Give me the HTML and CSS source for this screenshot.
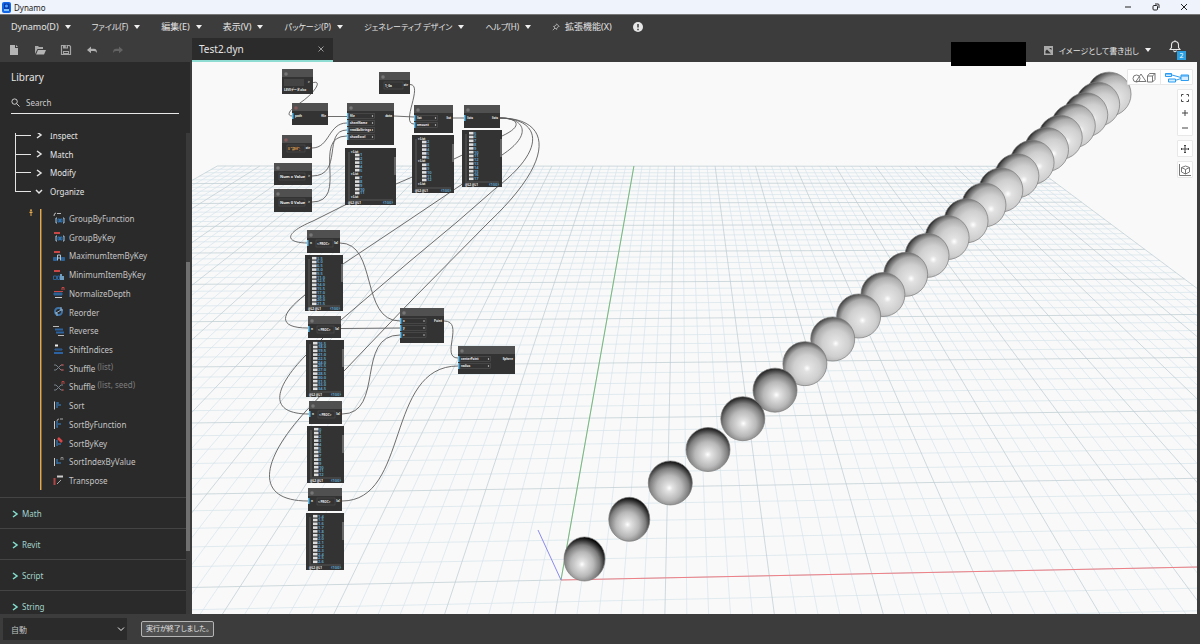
FILE: index.html
```html
<!DOCTYPE html>
<html lang="ja">
<head>
    <meta charset="UTF-8">
    <meta name="viewport" content="width=device-width, initial-scale=1.0">
    <title>Dynamo</title>
    <link rel="stylesheet" href="styles.css">
</head>
<body>
    <div class="titlebar">
        <svg class="app-logo" viewBox="0 0 9 11"><rect width="9" height="11" rx="2" fill="#1267e8"/><path d="M2 1.500h4.500l1 1V9H2z" fill="#0a3aa8"/><circle cx="4.500" cy="4" r="1.500" fill="#4fa4ff"/><path d="M2 7h5v2H2z" fill="#7fc0ff"/></svg>
        <span class="app-name">Dynamo</span>
        <div class="window-btns">
            <button aria-label="Minimize"><svg viewBox="0 0 8 8"><path d="M1 4h6"/></svg></button>
            <button aria-label="Restore"><svg viewBox="0 0 8 8"><rect x="1" y="2.500" width="4.500" height="4.500" rx="1"/><path d="M3 1h3q1 0 1 1v3"/></svg></button>
            <button aria-label="Close"><svg viewBox="0 0 8 8"><path d="M1 1l6 6M7 1L1 7"/></svg></button>
        </div>
    </div>

    <nav class="menubar">
        <button class="menu">Dynamo(D)</button>
        <button class="menu kana">ファイル(F)</button>
        <button class="menu">編集(E)</button>
        <button class="menu">表示(V)</button>
        <button class="menu kana">パッケージ(P)</button>
        <button class="menu kana">ジェネレーティブ デザイン</button>
        <button class="menu kana">ヘルプ(H)</button>
        <button class="menu-plain"><svg class="pin" viewBox="0 0 8 8"><path d="M4.500.800l2.700 2.700-1 .2L4.800 5l-.2 1.500L1.500 3.400 3 3.200l1.300-1.400zM3 5L.800 7.200"/></svg>拡張機能(X)</button>
        <button class="menu-plain" aria-label="Notifications"><svg class="alert" viewBox="0 0 10 10"><circle cx="5" cy="5" r="5" fill="#e6e6e6"/><path d="M5 2v3.500M5 6.800v1.400" stroke="#3c3c3c" stroke-width="1.500"/></svg></button>
    </nav>

    <div class="toolbar">
        <div class="tools">
            <button aria-label="New"><svg viewBox="0 0 12 12"><path d="M2 1h5v3h3v7H2z" fill="#b5b5b5"/><path d="M8 1l2 2H8z" fill="#b5b5b5"/></svg></button>
            <button aria-label="Open"><svg viewBox="0 0 12 12"><path d="M1 10V2h3l1 1h4v2H3.500z" fill="#a9a9a9"/><path d="M4 6h8l-2 4.500H2z" fill="#b5b5b5"/></svg></button>
            <button aria-label="Save"><svg viewBox="0 0 12 12"><path d="M1.500 1.500h8l1 1v8h-9z" fill="none" stroke="#a5a5a5" stroke-width="1.200"/><path d="M3 1h5v3.500H3zM3 7h6v4H3z" fill="#a5a5a5"/><path d="M6.300 1.500v2M4 8.500h4" stroke="#3c3c3c"/></svg></button>
            <button aria-label="Undo"><svg viewBox="0 0 12 12"><path d="M1 6l4-3.500v2.200h3q3 0 3 4.300-1-2-3-2H5v2.200z" fill="#b0b0b0"/></svg></button>
            <button aria-label="Redo"><svg viewBox="0 0 12 12"><path d="M11 6L7 2.500v2.200H4q-3 0-3 4.300 1-2 3-2h3v2.200z" fill="#636363"/></svg></button>
        </div>
        <div class="tab"><span>Test2.dyn</span><button class="tab-close" aria-label="Close tab"><svg viewBox="0 0 6 6"><path d="M.500.500l5 5M5.500.500l-5 5"/></svg></button></div>
        <div class="toolbar-right">
            <div class="account"></div>
            <button class="menu kana export"><svg viewBox="0 0 9 9"><rect x=".500" y=".500" width="8" height="8" fill="#aaa" stroke="#aaa"/><path d="M1.500 7.500V5L3 3.500l4 4zM5 2h2.500v2z" fill="#333"/></svg>イメージとして書き出し</button>
            <button class="bell" aria-label="Messages"><svg viewBox="0 0 12 13"><path d="M1 9.500h10L9.500 7.500V5q0-3.500-3.500-3.500T2.500 5v2.500zM4.500 10.500q1.500 2.500 3 0M6 .300v1" fill="none" stroke="#e8e8e8" stroke-width="1.100"/></svg><span class="badge">2</span></button>
        </div>
    </div>

    <main>
        <aside class="library">
            <h1>Library</h1>
            <label class="search">
                <svg viewBox="0 0 10 10"><circle cx="4" cy="4" r="3"/><path d="M6.200 6.200L9.500 9.500"/></svg>
                <input type="search" placeholder="Search" aria-label="Search">
            </label>
            <div class="scroll">
                <div class="list">
                    <ul class="tree">
                        <li><svg class="chev" viewBox="0 0 6 8"><path d="M1 1l4 3-4 3"/></svg>Inspect</li>
                        <li><svg class="chev" viewBox="0 0 6 8"><path d="M1 1l4 3-4 3"/></svg>Match</li>
                        <li><svg class="chev" viewBox="0 0 6 8"><path d="M1 1l4 3-4 3"/></svg>Modify</li>
                        <li><svg class="chev" viewBox="0 0 8 6"><path d="M1 1l3 3 3-3"/></svg>Organize</li>
                    </ul>
                    <div class="group">
                        <svg class="action" viewBox="0 0 4 7"><path d="M2 0v7M.500 3.500h3M1 2.200l1-1 1 1" stroke="#e5a94e" fill="none"/></svg>
                        <ul class="methods">
                            <li><svg viewBox="0 0 12 12"><path d="M1 4q0-3 2-3M4 1.500h4" stroke="#bbb"/><path d="M4 6H3v5h1M10 6h1v5h-1" stroke="#a5c8e4"/><path d="M5 7h1.500v3H5zM7.500 7H9v3H7.500z" stroke="#2f74b5"/></svg>GroupByFunction</li>
                            <li><svg viewBox="0 0 12 12"><path d="M1 2h6M2 1v2" stroke="#c94747" stroke-width="2"/><path d="M4 5H3v5h1M10 5h1v5h-1" stroke="#a5c8e4"/><path d="M5 6h1.500v3H5zM7.500 6H9v3H7.500z" stroke="#2f74b5"/></svg>GroupByKey</li>
                            <li><svg viewBox="0 0 12 12"><path d="M1 2h6M2 1v2" stroke="#c94747" stroke-width="2"/><path d="M.500 7.500h3v3h-3zM8.500 7.500h3v3h-3z" fill="#2c6296" stroke="#2c6296"/><path d="M4.500 10.500V5h3v5.500M5 8h2" stroke="#a9c3d8"/></svg>MaximumItemByKey</li>
                            <li><svg viewBox="0 0 12 12"><path d="M1 2h6M2 1v2" stroke="#c94747" stroke-width="2"/><path d="M.500 7h3v3.500h-3zM4.500 7h2v3.500h-2z" stroke="#2c6296"/><path d="M8 5v6M10 7v4" stroke="#6f9dc0" stroke-width="2"/></svg>MinimumItemByKey</li>
                            <li><svg viewBox="0 0 12 12"><path d="M9 3V.500h2V3M1 4.500h9" stroke="#c94747"/><path d="M1 6h8v2H1z" fill="#2c6296" stroke="#2c6296"/><path d="M2 10.500h7" stroke="#ccc"/></svg>NormalizeDepth</li>
                            <li><svg viewBox="0 0 12 12"><circle cx="5.500" cy="5.500" r="3.500" stroke="#3f74a8" stroke-width="2"/><path d="M3 7l5-3M8 1v3h2M2 7h2v3" stroke="#94b4d0"/></svg>Reorder</li>
                            <li><svg viewBox="0 0 12 12"><path d="M0 1.500h6M5 10.500h6" stroke="#bbb"/><path d="M2 4.500h8M3 7.500h8" stroke="#2c62a0" stroke-width="2"/></svg>Reverse</li>
                            <li><svg viewBox="0 0 12 12"><path d="M2 2.500h3" stroke="#eee" stroke-width="2"/><path d="M2 6h7v1H2z" stroke="#2c62a0"/><path d="M1 10h9" stroke="#2c62a0" stroke-width="2"/></svg>ShiftIndices</li>
                            <li><svg viewBox="0 0 12 12"><path d="M1 3h2l5 5h2M1 8h2l5-5h2" stroke="#76808a"/><path d="M8 3h3M8 8h3" stroke="#b04545"/></svg>Shuffle <em>(list)</em></li>
                            <li><svg viewBox="0 0 12 12"><path d="M1 4h2l5 5h2M1 9h2l5-5h2" stroke="#76808a"/><path d="M9 3V.500h2V3M9 9h2" stroke="#b04545"/></svg>Shuffle <em>(list, seed)</em></li>
                            <li><svg viewBox="0 0 12 12"><path d="M1.500 1.500v8" stroke="#ccc"/><path d="M4 2v6M4 3h2M5 5h3" stroke="#336a9d" stroke-width="1.500"/></svg>Sort</li>
                            <li><svg viewBox="0 0 12 12"><path d="M1.500 3v8" stroke="#ccc"/><path d="M5 9H4V3M5 6h3" stroke="#336a9d" stroke-width="1.500"/><path d="M4 3q0-2 2-2M7 1h3" stroke="#aaa"/></svg>SortByFunction</li>
                            <li><svg viewBox="0 0 12 12"><path d="M1.500 2v8" stroke="#ccc"/><path d="M4 3v6M5 7h3" stroke="#336a9d" stroke-width="1.500"/><path d="M5 1l4 4" stroke="#d84848" stroke-width="2.500"/></svg>SortByKey</li>
                            <li><svg viewBox="0 0 12 12"><path d="M1.500 2v8" stroke="#ccc"/><path d="M4 3v5M4 7h4" stroke="#336a9d" stroke-width="1.500"/><path d="M8 4V1.500h2V4" stroke="#888"/></svg>SortIndexByValue</li>
                            <li><svg viewBox="0 0 12 12"><path d="M4 1.500h6" stroke="#ccc" stroke-width="2"/><path d="M1.500 3v7" stroke="#b04545" stroke-width="2"/><path d="M4 9l4-4" stroke="#aaa"/></svg>Transpose</li>
                        </ul>
                    </div>
                    <ul class="sections">
                        <li><svg class="chev" viewBox="0 0 6 8"><path d="M1 1l4 3-4 3"/></svg>Math</li>
                        <li><svg class="chev" viewBox="0 0 6 8"><path d="M1 1l4 3-4 3"/></svg>Revit</li>
                        <li><svg class="chev" viewBox="0 0 6 8"><path d="M1 1l4 3-4 3"/></svg>Script</li>
                        <li><svg class="chev" viewBox="0 0 6 8"><path d="M1 1l4 3-4 3"/></svg>String</li>
                    </ul>
                </div>
                <div class="track"><div class="thumb"></div></div>
            </div>
        </aside>

        <section class="workspace">
            <svg class="canvas" id="canvas" viewBox="192 62 1005 552" preserveAspectRatio="xMinYMin slice">
                <defs id="defs"></defs>
                <g id="grid"></g>
                <path d="M561 580L538 530" stroke="#8a8af0"/>
                <g id="spheres"></g>
                <g id="wires"></g>
                <g id="nodes"></g>
            </svg>
            <div class="controls">
                <div class="switch">
                    <button aria-label="Geometry view"><svg viewBox="0 0 24 11"><g fill="none" stroke="#777"><circle cx="4.500" cy="6.500" r="3.500"/><path d="M4 9.500L9 2l5 7.500zM15.500 4h5v6h-5zM15.500 4l2-2.500h5.500v6L20.500 10M20.500 4L23 1.500"/></g></svg></button>
                    <button aria-label="Graph view"><svg viewBox="0 0 24 11"><g fill="#d5edff" stroke="#2b9cf2"><path d="M.500 1.500h6v3h-6zM3.500 7h7v3h-7zM16 3h7.500v5.500H16z"/><path d="M7 3l9 2.500M10 8.500l6-2M16 4h7.500M.500 2h6" fill="none"/></g></svg></button>
                </div>
                <div class="stack">
                    <button aria-label="Fit"><svg viewBox="0 0 10 10"><path d="M1.500 3.500v-2h2M6.500 1.500h2v2M8.500 6.500v2h-2M3.500 8.500h-2v-2"/></svg></button>
                    <button aria-label="Zoom in"><svg viewBox="0 0 10 10"><path d="M5 2v6M2 5h6"/></svg></button>
                    <button aria-label="Zoom out"><svg viewBox="0 0 10 10"><path d="M2 5h6"/></svg></button>
                </div>
                <div class="stack"><button aria-label="Pan"><svg viewBox="0 0 10 10"><path d="M5 1v8M1 5h8M4 2l1-1 1 1M4 8l1 1 1-1M2 4L1 5l1 1M8 4l1 1-1 1"/></svg></button></div>
                <div class="stack"><button aria-label="Orbit"><svg class="orbit" viewBox="0 0 14 14"><path d="M1.500 1v11.500H13M7.500 3l4 1.500V9l-4 2-4-2V4.500zM3.500 4.500l4 2 4-2M7.500 6.500V11" /></svg></button></div>
            </div>
        </section>
    </main>

    <footer>
        <div class="run-mode">
            <select aria-label="実行モード"><option>自動</option><option>手動</option></select>
            <svg viewBox="0 0 8 6"><path d="M1 1.500l3 3 3-3"/></svg>
        </div>
        <output class="status">実行が終了しました。</output>
    </footer>
    <script src="script.js"></script>
</body>
</html>
```

FILE: styles.css
```css
* {
    box-sizing: border-box;
}

body {
    margin: 0;
    height: 100vh;
    display: flex;
    flex-direction: column;
    overflow: hidden;
    background-color: #3c3c3c;
    color: #e4e4e4;
    font-family: "Noto Sans", "Noto Sans CJK JP", sans-serif;
    font-size: 8px;
    font-feature-settings: "palt";
}

button {
    padding: 0;
    border: 0;
    background: none;
    color: inherit;
    font: inherit;
    font-feature-settings: inherit;
    display: flex;
    align-items: center;
    justify-content: center;
    white-space: nowrap;
    cursor: pointer;
}

ul {
    list-style: none;
    margin: 0;
    padding: 0;
}

svg {
    flex: none;
}

/* title bar */
.titlebar {
    display: flex;
    align-items: center;
    flex: none;
    height: 15px;
    padding-left: 2px;
    background-color: #eff3fb;
    border-bottom: 1px solid #777;
    color: #222;
}

.app-logo {
    width: 9px;
    height: 11px;
}

.app-name {
    margin-left: 3px;
}

.window-btns {
    display: flex;
    gap: 20px;
    margin-left: auto;
    padding-right: 12px;
}

.window-btns svg {
    width: 8px;
    height: 8px;
    fill: none;
    stroke: #222;
}

/* menus */
.menubar {
    display: flex;
    align-items: center;
    gap: 21px;
    flex: none;
    height: 23px;
    padding-left: 11px;
    font-size: 9px;
}

.kana {
    font-size: 8px;
}

.menu::after {
    content: "";
    margin-left: 6px;
    border: 3px solid transparent;
    border-top: 4px solid #f0f0f0;
    border-bottom: 0;
}

.menu-plain svg {
    margin-right: 5px;
}

.pin {
    width: 8px;
    height: 8px;
    fill: none;
    stroke: #aaa;
}

.alert {
    width: 10px;
    height: 10px;
}

/* tool bar */
.toolbar {
    display: flex;
    flex: none;
    height: 24px;
}

.tools {
    display: flex;
    gap: 14px;
    width: 192px;
    padding-left: 8px;
}

.tools svg {
    width: 12px;
    height: 12px;
}

.tab {
    display: flex;
    align-items: center;
    justify-content: space-between;
    width: 141px;
    padding: 0 9px 0 7px;
    background-color: #2b2b2b;
    border-bottom: 2px solid #8fdcd2;
    font-size: 10px;
}

.tab-close svg {
    width: 6px;
    height: 6px;
    stroke: #999;
}

.toolbar-right {
    display: flex;
    align-items: center;
    gap: 18px;
    margin-left: auto;
    padding-right: 19px;
    position: relative;
}

.account {
    position: absolute;
    z-index: 2;
    top: 4px;
    right: 174px;
    width: 75px;
    height: 24px;
    background-color: #000;
}

.export svg {
    width: 9px;
    height: 9px;
    margin-right: 6px;
}

.bell {
    position: relative;
    align-self: flex-start;
    margin-top: 2px;
}

.bell svg {
    width: 12px;
    height: 13px;
}

.badge {
    position: absolute;
    top: 11px;
    left: 8px;
    width: 9px;
    background-color: #2b9fe0;
    color: #fff;
    font-size: 7px;
    line-height: 9px;
    text-align: center;
}

/* library */
main {
    display: flex;
    flex: 1;
    min-height: 0;
}

.library {
    display: flex;
    flex-direction: column;
    flex: none;
    width: 192px;
    background-color: #2a2a2a;
    border-right: 2px solid #3c3c3c;
}

.library h1 {
    margin: 7px 0 0 11px;
    font-size: 10px;
    font-weight: normal;
    line-height: 16px;
}

.search {
    display: flex;
    align-items: center;
    flex: none;
    height: 22px;
    margin: 7px 11px 19px;
    border-bottom: 1px solid #e8e8e8;
}

.search svg {
    width: 9px;
    height: 9px;
    fill: none;
    stroke: #ddd;
}

.search input {
    flex: 1;
    min-width: 0;
    padding: 0 0 0 6px;
    border: 0;
    outline: 0;
    background: none;
    color: #ddd;
    font: inherit;
}

.search input::placeholder {
    color: #ccc;
}

.scroll {
    display: flex;
    flex: 1;
    min-height: 0;
}

.list {
    flex: 1;
    overflow: hidden;
}

.track {
    width: 4px;
    background-color: #3a3a3a;
}

.thumb {
    height: 60%;
    margin-top: 129px;
    background-color: #707070;
}

.tree {
    display: grid;
    grid-auto-rows: 1fr;
    height: 75px;
    margin: -7px 0 0 15px;
}

.tree li {
    display: flex;
    align-items: center;
    border-left: 1px solid #e4e4e4;
}

.tree li::before {
    content: "";
    width: 15px;
    margin-right: 4px;
    border-top: 1px solid #e4e4e4;
}

.tree li:last-child {
    border-color: transparent;
    background: linear-gradient(#e4e4e4, #e4e4e4) 0 0 / 1px 10px no-repeat border-box;
}

.tree li:last-child::before {
    margin-left: -1px;
    width: 16px;
}

.chev {
    width: 8px;
    height: 8px;
    margin-right: 7px;
    fill: none;
    stroke: currentColor;
    stroke-width: 1.5;
}

.group {
    display: flex;
    align-items: flex-start;
    margin: 8px 0 7px 29px;
}

.action {
    width: 4px;
    height: 7px;
    margin-right: 7px;
}

.methods {
    display: grid;
    grid-auto-rows: 1fr;
    height: 281px;
    padding-left: 12px;
    border-left: 1px solid #e5a94e;
    box-shadow: inset 1px 0 #7d6238;
    color: #c4c4c4;
}

.methods li {
    display: flex;
    align-items: center;
    white-space: pre;
}

.methods svg {
    width: 12px;
    height: 12px;
    margin-right: 4px;
    fill: none;
}

.methods em {
    margin-bottom: 4px;
    color: #7d7d7d;
    font-style: normal;
}

.sections li {
    display: flex;
    align-items: center;
    height: 31px;
    padding: 1px 0 0 11px;
    border-top: 1px solid #444;
    color: #a4d4cc;
}

.sections .chev {
    margin-right: 3px;
    color: #84e0ce;
}

/* workspace */
.workspace {
    position: relative;
    flex: 1;
    margin-right: 3px;
    overflow: hidden;
    background-color: #f9f9f9;
}

.canvas {
    display: block;
    width: 100%;
    height: 100%;
    fill: none;
}

.canvas text {
    font-size: 3px;
    font-weight: bold;
    fill: #eee;
}

.canvas .value {
    font-size: 4px;
}

.canvas .code {
    fill: #e0a050;
}

.canvas .number {
    font-size: 4px;
    fill: #5b9fc4;
}

.controls {
    position: absolute;
    top: 7px;
    right: 4px;
    display: flex;
    flex-direction: column;
    align-items: flex-end;
    gap: 4px;
}

.switch,
.stack {
    background-color: #fff;
    border: 1px solid #e8e8e8;
    border-radius: 1px;
}

.switch {
    display: flex;
}

.switch button {
    width: 32px;
    height: 14px;
}

.switch button + button {
    border-left: 1px solid #e8e8e8;
}

.switch svg {
    width: 24px;
    height: 11px;
}

.stack button {
    width: 14px;
    height: 15px;
}

.stack svg {
    width: 10px;
    height: 10px;
    fill: none;
    stroke: #444;
}

.stack .orbit {
    width: 14px;
    height: 14px;
    stroke: #777;
}

/* footer */
footer {
    display: flex;
    align-items: center;
    flex: none;
    gap: 14px;
    height: 30px;
    padding-left: 3px;
}

.run-mode {
    position: relative;
}

.run-mode select {
    width: 124px;
    height: 22px;
    padding: 0 8px;
    border: 0;
    appearance: none;
    background-color: #2b2b2b;
    color: #c0c0c0;
    font: inherit;
}

.run-mode svg {
    position: absolute;
    right: 2px;
    top: 8px;
    width: 8px;
    height: 6px;
    fill: none;
    stroke: #eee;
    pointer-events: none;
}

.status {
    padding: 0 4px;
    border: 1px solid #b5b5b5;
    border-radius: 2px;
    background-color: #505050;
    font-size: 7px;
    line-height: 14px;
}
```

FILE: script.js
```js
const NS = 'http://www.w3.org/2000/svg';

function add(parent, tag, attrs, text) {
    const el = document.createElementNS(NS, tag);
    for (const key in attrs) {
        el.setAttribute(key, attrs[key]);
    }
    if (text) {
        el.textContent = text;
    }
    parent.appendChild(el);
    return el;
}

const defs = document.getElementById('defs');
const grid = document.getElementById('grid');
const spheres = document.getElementById('spheres');
const wires = document.getElementById('wires');
const nodes = document.getElementById('nodes');

// ground plane to screen
function project(m, n) {
    const w = 1 + 0.0053 * m + 0.157 * n;
    return [
        ((561 + 108.2 * m + 106.8 * n) / w).toFixed(1),
        ((580 + 0.93 * m - 15.3 * n) / w).toFixed(1)
    ];
}

function gridLine(a, b, color, width) {
    add(grid, 'path', { d: 'M' + project(...a) + 'L' + project(...b), stroke: color, 'stroke-width': width });
}

function drawGrid() {
    for (const major of [false, true]) {
        const color = major ? '#bccbd1' : '#d5e4eb';
        for (let i = -50; i <= 50; i++) {
            if ((i % 5 === 0) !== major) continue;
            gridLine([i / 5, -2], [i / 5, 10], color, 0.7);
            if (i >= -10) {
                gridLine([-10, i / 5], [10, i / 5], color, 0.7);
            }
        }
    }
    gridLine([0, 0], [10, 0], '#ee7f86', 1);
    gridLine([0, 0], [0, 10], '#6cb572', 0.9);
}

function drawSpheres() {
    for (let k = 23; k >= 0; k--) {
        const w = 1 + 0.0458 * k;
        const t = Math.min(k / 12, 1);
        const gradient = add(defs, 'radialGradient', {
            id: 'ball' + k, cx: 0.44 + 0.22 * t, cy: 0.62 - 0.03 * t, r: 0.62 + 0.09 * t
        });
        const stops = [[0, '#fff'], [0.12, '#e2e2e2'], [0.45, '#b8b8b8'], [0.7, '#7e7e7e'], [0.88, '#303030'], [1, '#000']];
        if (k > 5) {
            stops[2][1] = '#cfcfcf';
            stops[3][1] = '#acacac';
            stops[4][1] = '#555';
        }
        for (const [offset, color] of stops) {
            add(gradient, 'stop', { offset: offset, 'stop-color': color });
        }
        add(spheres, 'ellipse', {
            cx: (584.5 + 73.6 * k) / w, cy: (559 - 15.9 * k) / w,
            rx: k < 2 ? 20.5 : 22, ry: 22,
            fill: 'url(#ball' + k + ')', stroke: '#7a7a7a', 'stroke-width': 0.7
        });
    }
}

const wirePaths = [
    'M312 83C323 79 316 92 300 103C286 112 288 116 292 116',
    'M328 116.500H347', 'M312 148C330 148 328 123 347 123',
    'M312 176C344 176 322 130 347 130', 'M312 202C350 202 310 136 347 136',
    'M394 116L414 117', 'M410 84.500C424 84.500 400 124 414 124', 'M452 118H464',
    'M500 118C518 118 524 126 502 136L454 159L396 184L345 205L313 221C282 234 286 243 308 243',
    'M500 118C524 118 534 134 502 155L461 185L406 222L343 264L305 295C280 314 277 328 308 328',
    'M500 118C536 118 552 145 496 188L457 222L409 262L341 320L306 355C272 390 269 414 309 414',
    'M500 118C548 118 560 155 489 222L410 302L344 371L306 411C260 461 254 501 308 501',
    'M340 243C378 243 360 321 400 321', 'M341 328.500L400 328',
    'M342 414C385 414 355 335 400 335', 'M342 501C410 501 385 366 458 366',
    'M444 321C465 321 440 358 458 358'
];

// x, y, width, height, inputs, output, value
const nodeData = [
    [282, 69, 31, 25, [], '', 'file'],
    [292, 103, 36, 22, ['path'], 'file', ''],
    [282, 135, 30, 23, [], 'str', '0 "部材";'],
    [274, 163, 38, 22, [], '>', 'Num x Value'],
    [274, 189, 38, 23, [], '>', 'Num 0 Value'],
    [347, 103, 47, 42, ['file', 'sheetName', 'readAsStrings', 'showExcel'], 'data', ''],
    [379, 72, 31, 22, [], 'str', '1; 0a'],
    [414, 105, 39, 28, ['list', 'amount'], 'list', ''],
    [464, 105, 36, 23, ['lists'], 'lists', ''],
    [307, 230, 33, 23, ['n'], '[a]', '< PROC>'],
    [308, 316, 33, 22, ['n'], '[a]', '< PROC>'],
    [309, 401, 33, 23, ['n'], '[a]', '< PROC>'],
    [308, 488, 34, 23, ['n'], '[a]', '< PROC>'],
    [400, 308, 44, 35, ['x', 'y', 'z'], 'Point', ''],
    [458, 346, 57, 28, ['centerPoint', 'radius'], 'Sphere', '']
];

function drawNode([x, y, w, h, inputs, output, value]) {
    const isCode = value.includes('"');
    add(nodes, 'rect', { x: x, y: y, width: w, height: h, fill: '#333' });
    add(nodes, 'rect', { x: x, y: y, width: w, height: 8, fill: '#505050' });
    add(nodes, 'rect', { x: x + 3, y: y + 4, width: 2, height: 2, stroke: isCode || inputs[0] === 'path' ? '#c66' : '#aaa', 'stroke-width': 0.5 });
    if (value === 'file') {
        add(nodes, 'rect', { x: x + 2, y: y + 10, width: 20, height: 7, fill: '#444' });
        add(nodes, 'text', { x: x + 2, y: y + 22 }, 'LEVEデータ.xlsx');
        add(nodes, 'text', { x: x + 26, y: y + 14 }, '>');
        return;
    }
    inputs.forEach(function (name, i) {
        const py = y + 13 + i * 7;
        add(nodes, 'rect', { x: x, y: py - 3, width: 1.5, height: 6, fill: '#5bbcf0' });
        if (inputs.length > 1) {
            add(nodes, 'rect', { x: x + 2, y: py - 2.5, width: w * 0.5 + 2, height: 5, stroke: '#5a5a5a', 'stroke-width': 0.5 });
            add(nodes, 'circle', { cx: x + w * 0.5 + 2, cy: py, r: 0.7, fill: '#ddd' });
        }
        add(nodes, 'text', { x: x + 3, y: py + 1 }, name);
    });
    if (value) {
        const left = inputs.length ? 9 : 5;
        add(nodes, 'rect', { x: x + left, y: y + 10, width: w - left - 7, height: 7, stroke: '#555', 'stroke-width': 0.5 });
        add(nodes, 'text', { x: x + left + 1, y: y + 14.5, class: isCode ? 'code' : output === '>' ? 'value' : '' }, value);
    }
    add(nodes, 'text', { x: x + w - 2, y: y + 14, 'text-anchor': 'end' }, output);
}

// x, y, width, height, first value, step, nested
const previews = [
    [345, 148, 51, 57, 0, 1, true],
    [412, 135, 42, 58, 1, 1, true],
    [462, 130, 40, 57, 5, 1, false],
    [305, 255, 38, 56, 3.5, 1.5, false],
    [306, 340, 38, 57, 16.5, 1.5, false],
    [307, 426, 37, 57, 0, 1, false],
    [306, 513, 38, 57, 1.4, 0.1, false]
];

function drawPreview([x, y, w, h, first, step, nested]) {
    const left = x + (nested ? 10 : 7);
    add(nodes, 'rect', { x: x, y: y, width: w, height: h, fill: '#333' });
    add(nodes, 'path', { d: 'M' + (x + 4) + ' ' + (y + 4) + 'v' + (h - 10), stroke: '#999', 'stroke-width': 0.4 });
    for (let i = 0; i < 13; i++) {
        const ry = y + 4.5 + i * 3.8;
        if (nested && i % 6 === 0) {
            add(nodes, 'text', { x: x + 6, y: ry }, '▾List');
            continue;
        }
        add(nodes, 'rect', { x: left, y: ry - 2.6, width: 4.5, height: 2.6, fill: '#ddd' });
        add(nodes, 'text', { x: left + 5, y: ry, class: 'number' }, (first + i * step).toFixed(step % 1 ? 1 : 0));
    }
    add(nodes, 'path', { d: 'M' + (x + 3) + ' ' + (y + h - 5) + 'H' + (x + w - 3), stroke: '#888', 'stroke-width': 0.4 });
    add(nodes, 'text', { x: x + 3, y: y + h - 1.5 }, '@L2 @L1');
    add(nodes, 'text', { x: x + w - 3, y: y + h - 1.5, 'text-anchor': 'end', class: 'number' }, '{100}');
    add(nodes, 'rect', { x: x + w - 1.5, y: y + 9, width: 1, height: 18, fill: '#999' });
}

drawGrid();
drawSpheres();
wirePaths.forEach(function (d) {
    add(wires, 'path', { d: d, stroke: '#5c5c5c', 'stroke-width': 0.9 });
});
nodeData.forEach(drawNode);
previews.forEach(drawPreview);
```
